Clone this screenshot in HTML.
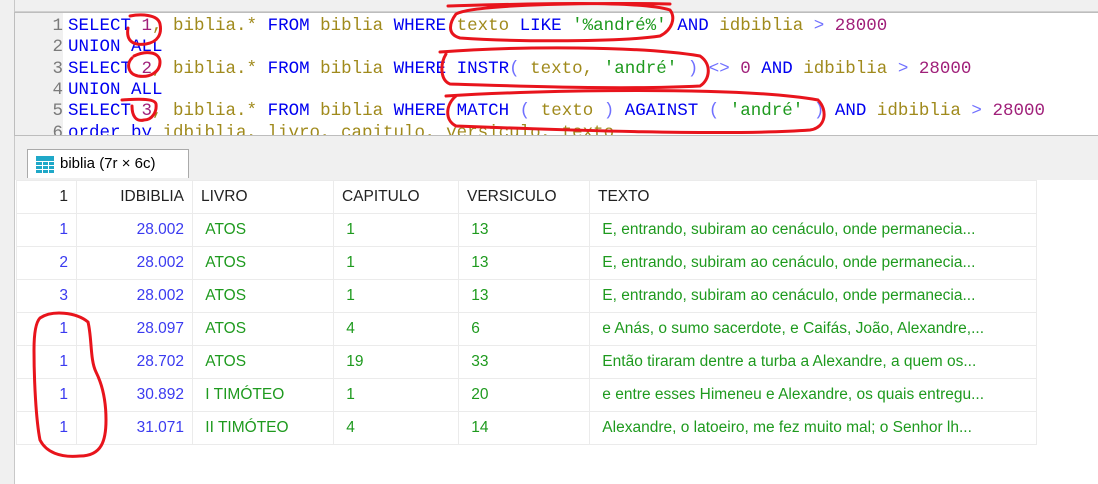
<!DOCTYPE html><html><head><meta charset="utf-8"><style>
body{margin:0;width:1098px;height:484px;overflow:hidden;background:#fff;position:relative;font-family:"Liberation Sans",sans-serif}
.abs{position:absolute}
#left{left:0;top:0;width:14px;height:484px;background:#f0f0f0;border-right:1px solid #c8c8c8}
#top{left:15px;top:0;width:1083px;height:11px;background:#f0f0f0;border-bottom:1px solid #d0d0d0}
#mid{left:15px;top:135px;width:1083px;height:45px;background:#f0f0f0}
#ed{left:14px;top:12px;width:1084px;height:122px;background:#fff;border:1px solid #bdbdbd;border-right:none;overflow:hidden}
#gut{left:0;top:0;width:48px;height:123px;background:#f0f0f0}
.ln{position:absolute;left:0;width:48px;text-align:right;font:17.5px/21.3px "Liberation Mono",monospace;color:#7a7a7a}
.cl{position:absolute;left:53px;font:17.5px/21.3px "Liberation Mono",monospace;white-space:pre;color:#a08a1c}
.k{color:#0000f0}.n{color:#a0207a}.s{color:#1e9a1e}.p{color:#7070ff}
#tab{left:27px;top:149px;width:160px;height:28px;background:#fff;border:1px solid #aaa;border-bottom:none;font-size:15px;line-height:28px}
#grid{left:16px;top:180px;border-collapse:collapse;font-size:15.5px}
#grid td{height:32px;border:1px solid #ebebeb;padding:0 8px;white-space:nowrap}
.b{color:#3a3af0}.g{color:#1e9a1e}.r{text-align:right}
</style></head><body>
<div class="abs" id="left"></div><div class="abs" id="top"></div><div class="abs" id="mid"></div>
<div class="abs" id="ed"><div class="abs" id="gut"></div>
<div class="ln" style="top:3px">1</div><div class="ln" style="top:24.3px">2</div><div class="ln" style="top:45.6px">3</div><div class="ln" style="top:66.9px">4</div><div class="ln" style="top:88.2px">5</div><div class="ln" style="top:109.5px">6</div>
<div class="cl" style="top:3px"><span class="k">SELECT</span> <span class="n">1</span>, biblia.* <span class="k">FROM</span> biblia <span class="k">WHERE</span> texto <span class="k">LIKE</span> <span class="s">'%andré%'</span> <span class="k">AND</span> idbiblia <span class="p">&gt;</span> <span class="n">28000</span></div>
<div class="cl" style="top:24.3px"><span class="k">UNION ALL</span></div>
<div class="cl" style="top:45.6px"><span class="k">SELECT</span> <span class="n">2</span>, biblia.* <span class="k">FROM</span> biblia <span class="k">WHERE</span> <span class="k">INSTR</span><span class="p">(</span> texto, <span class="s">'andré'</span> <span class="p">) &lt;&gt;</span> <span class="n">0</span> <span class="k">AND</span> idbiblia <span class="p">&gt;</span> <span class="n">28000</span></div>
<div class="cl" style="top:66.9px"><span class="k">UNION ALL</span></div>
<div class="cl" style="top:88.2px"><span class="k">SELECT</span> <span class="n">3</span>, biblia.* <span class="k">FROM</span> biblia <span class="k">WHERE</span> <span class="k">MATCH</span> <span class="p">(</span> texto <span class="p">)</span> <span class="k">AGAINST</span> <span class="p">(</span> <span class="s">'andré'</span> <span class="p">)</span> <span class="k">AND</span> idbiblia <span class="p">&gt;</span> <span class="n">28000</span></div>
<div class="cl" style="top:109.5px"><span class="k">order by</span> idbiblia, livro, capitulo, versiculo, texto</div>
</div>
<div class="abs" id="tab"><svg style="position:absolute;left:8px;top:6px" width="18" height="17"><rect width="18" height="17" fill="#1fa8c8"/><g stroke="#fff" stroke-width="1"><path d="M0 5.5H18M0 9.5H18M0 13.5H18M6.5 5V17M12.5 5V17"/></g></svg><span style="position:absolute;left:32px">biblia (7r × 6c)</span></div>
<table class="abs" id="grid">
<tr style="color:#222"><td class="r" style="width:43px">1</td><td class="r" style="width:99px">IDBIBLIA</td><td style="width:124px">LIVRO</td><td style="width:108px">CAPITULO</td><td style="width:114px">VERSICULO</td><td style="width:430px">TEXTO</td></tr>
<tr><td class="r b">1</td><td class="r b">28.002</td><td class="g">&nbsp;ATOS</td><td class="g">&nbsp;1</td><td class="g">&nbsp;13</td><td class="g">&nbsp;E, entrando, subiram ao cenáculo, onde permanecia...</td></tr>
<tr><td class="r b">2</td><td class="r b">28.002</td><td class="g">&nbsp;ATOS</td><td class="g">&nbsp;1</td><td class="g">&nbsp;13</td><td class="g">&nbsp;E, entrando, subiram ao cenáculo, onde permanecia...</td></tr>
<tr><td class="r b">3</td><td class="r b">28.002</td><td class="g">&nbsp;ATOS</td><td class="g">&nbsp;1</td><td class="g">&nbsp;13</td><td class="g">&nbsp;E, entrando, subiram ao cenáculo, onde permanecia...</td></tr>
<tr><td class="r b">1</td><td class="r b">28.097</td><td class="g">&nbsp;ATOS</td><td class="g">&nbsp;4</td><td class="g">&nbsp;6</td><td class="g">&nbsp;e Anás, o sumo sacerdote, e Caifás, João, Alexandre,...</td></tr>
<tr><td class="r b">1</td><td class="r b">28.702</td><td class="g">&nbsp;ATOS</td><td class="g">&nbsp;19</td><td class="g">&nbsp;33</td><td class="g">&nbsp;Então tiraram dentre a turba a Alexandre, a quem os...</td></tr>
<tr><td class="r b">1</td><td class="r b">30.892</td><td class="g">&nbsp;I TIMÓTEO</td><td class="g">&nbsp;1</td><td class="g">&nbsp;20</td><td class="g">&nbsp;e entre esses Himeneu e Alexandre, os quais entregu...</td></tr>
<tr><td class="r b">1</td><td class="r b">31.071</td><td class="g">&nbsp;II TIMÓTEO</td><td class="g">&nbsp;4</td><td class="g">&nbsp;14</td><td class="g">&nbsp;Alexandre, o latoeiro, me fez muito mal; o Senhor lh...</td></tr>
</table>
<svg class="abs" style="left:0;top:0" width="1098" height="484" fill="none" stroke="#e8141c" stroke-width="3" stroke-linecap="round">
<path d="M130 16C140 14 158 14 160 24C162 34 158 42 146 44C132 46 126 40 128 28"/>
<path d="M134 56C146 50 160 52 160 62C160 72 150 78 138 76C128 74 126 64 132 58"/>
<path d="M122 100C135 99 155 98 156 104C157 112 152 120 144 120C136 122 132 116 132 106"/>
<path d="M448 6C520 4 640 0 670 10C676 18 672 30 660 36C620 42 520 42 460 38C446 34 450 22 456 14C470 6 560 2 670 4"/>
<path d="M440 52C520 46 640 46 700 56C712 64 710 80 700 86C620 90 520 86 450 84C440 80 440 64 446 54"/>
<path d="M446 96C540 90 740 86 818 100C828 110 826 128 810 130C730 136 560 130 456 126C444 120 446 104 456 96"/>
<path d="M40 318C52 310 76 312 88 322C92 338 90 360 96 372C102 384 106 400 106 420C106 440 102 456 80 456C60 458 46 452 40 440C36 420 34 380 34 350C34 334 36 322 40 318"/>
</svg>
</body></html>
